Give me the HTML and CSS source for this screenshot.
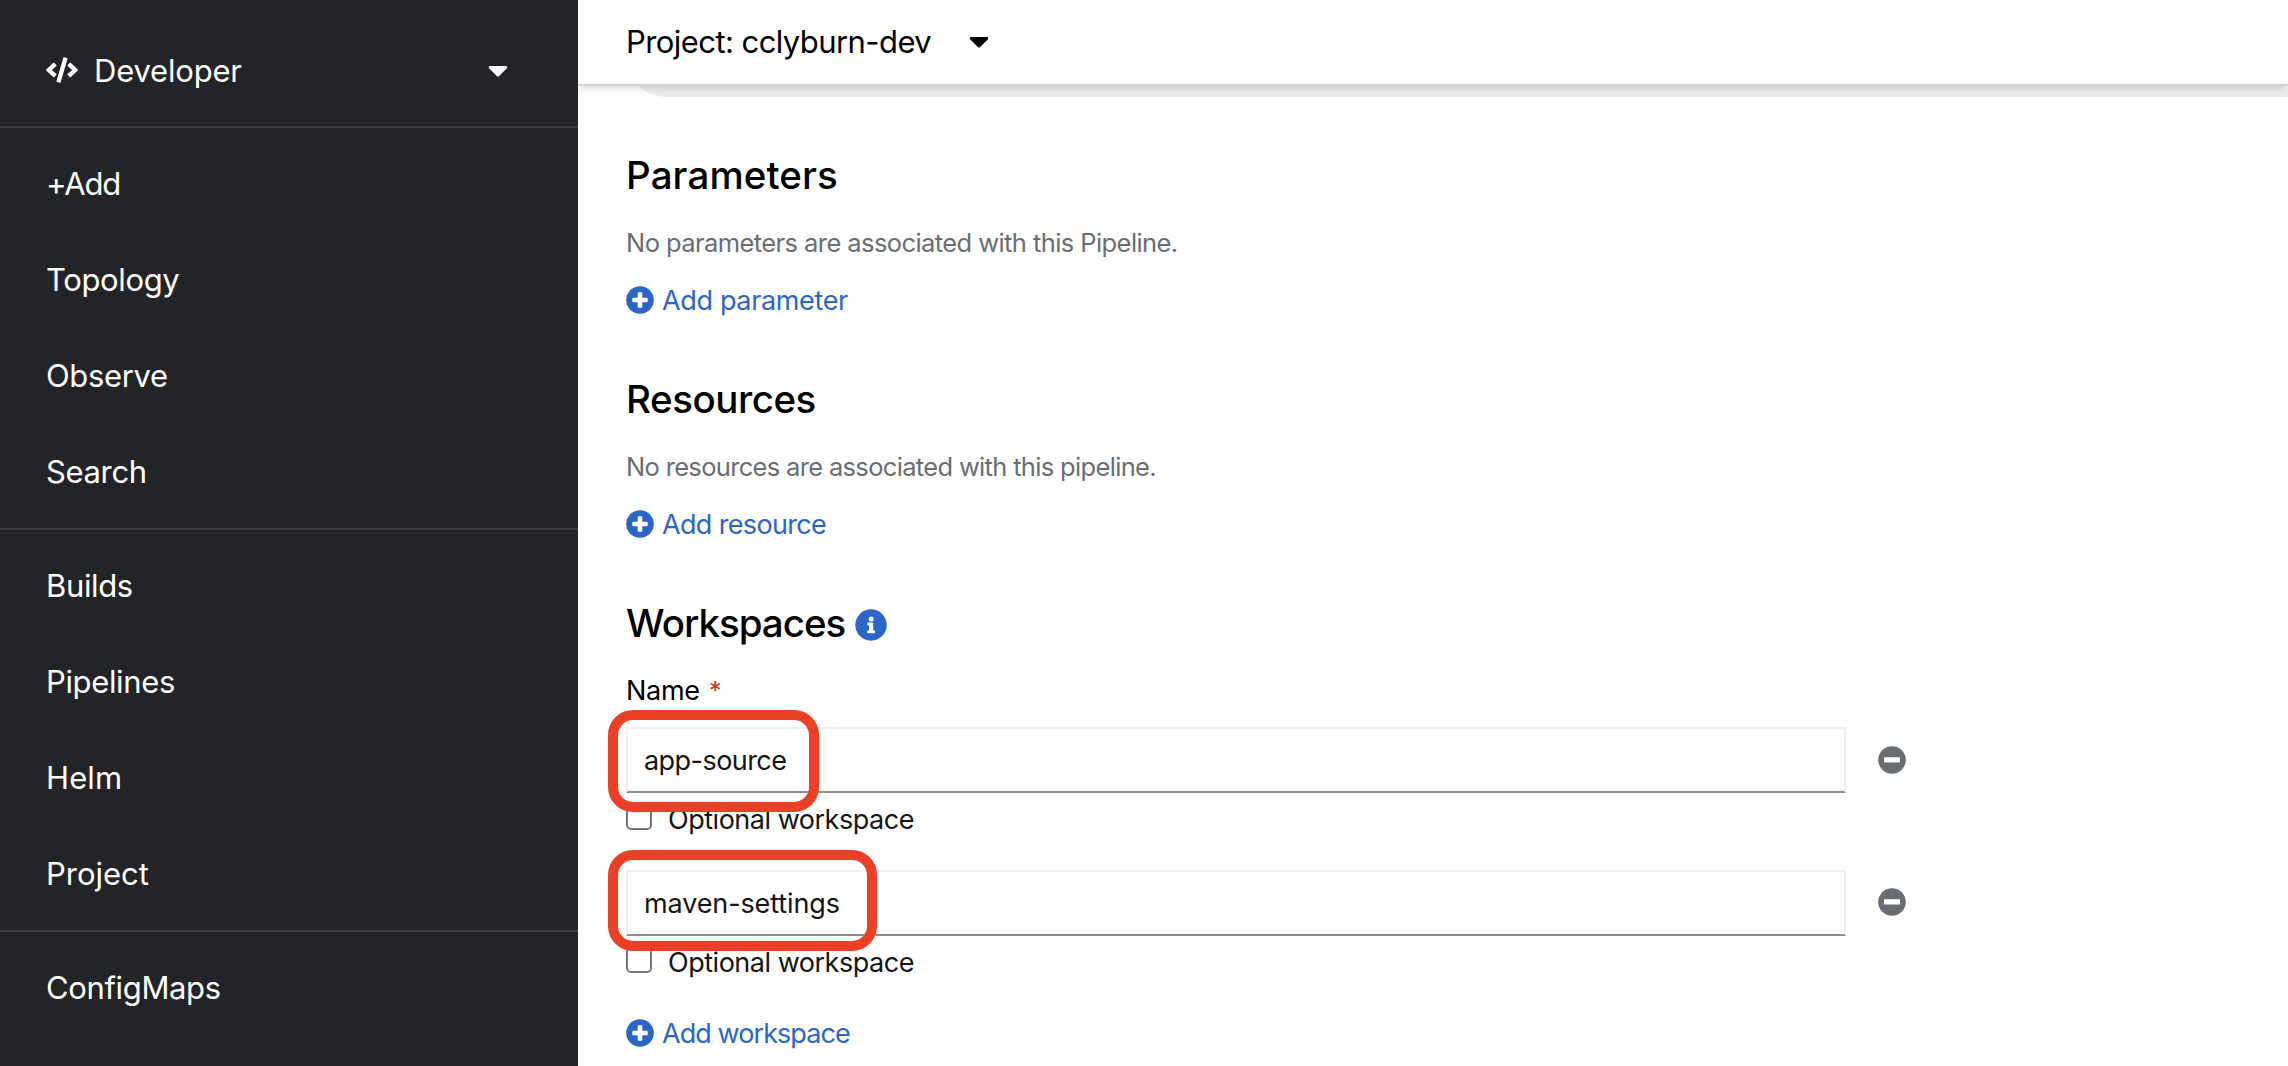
FILE: index.html
```
<!DOCTYPE html>
<html lang="en">
<head>
<meta charset="utf-8">
<title>Pipeline builder</title>
<link rel="stylesheet" href="styles.css">
</head>
<body>
<svg class="defs" aria-hidden="true">
  <symbol id="caret" viewBox="0 0 320 512"><path d="M31.3 192h257.3c17.8 0 26.7 21.5 14.1 34.1L174.1 354.8c-7.8 7.8-20.5 7.8-28.3 0L17.2 226.1C4.6 213.5 13.5 192 31.3 192z"/></symbol>
  <symbol id="plus" viewBox="0 0 28 28"><circle cx="14" cy="14" r="13.8"/><path d="M14 6.800v14.400M6.800 14h14.400" fill="none" stroke="#fff" stroke-width="4.600"/><path d="M14 6.300v15.400M6.300 14h15.400" fill="none" stroke="#fff" stroke-width="3.400"/></symbol>
  <symbol id="minus" viewBox="0 0 28 28"><circle cx="14" cy="14" r="13.8"/><rect x="6" y="11.2" width="16" height="5.4" rx="0.8" fill="#fff"/></symbol>
</svg>

<nav class="sidebar">
  <div class="perspective">
    <svg class="code-icon" viewBox="0 0 640 512"><path d="M278.9 511.5l-61-17.700c-6.400-1.800-10-8.500-8.200-14.900L346.200 8.700c1.800-6.400 8.500-10 14.900-8.200l61 17.700c6.400 1.800 10 8.500 8.200 14.900L293.800 503.300c-1.900 6.400-8.500 10.100-14.900 8.200zm-114-112.200l43.500-46.400c4.600-4.900 4.300-12.700-.8-17.200L117 256l90.600-79.700c5.100-4.500 5.500-12.300.8-17.200l-43.500-46.400c-4.500-4.800-12.100-5.100-17-.5L3.800 247.200c-5.100 4.700-5.100 12.800 0 17.500l144.100 135.100c4.900 4.600 12.500 4.400 17-.5zm327.200.6l144.100-135.100c5.100-4.700 5.100-12.800 0-17.500L492.100 112.100c-4.800-4.500-12.400-4.300-17 .5L431.600 159c-4.600 4.900-4.300 12.700.8 17.200L523 256l-90.600 79.700c-5.100 4.500-5.500 12.300-.8 17.200l43.500 46.400c4.500 4.900 12.100 5.100 17 .6z"/></svg>
    <span class="bar-text">Developer</span>
    <svg class="caret"><use href="#caret"/></svg>
  </div>
  <ul class="nav-group">
    <li class="tight-add">+Add</li><li>Topology</li><li>Observe</li><li>Search</li>
  </ul>
  <ul class="nav-group">
    <li>Builds</li><li>Pipelines</li><li class="loose">Helm</li><li class="normal">Project</li>
  </ul>
  <ul class="nav-group">
    <li>ConfigMaps</li>
  </ul>
</nav>

<main class="main">
  <header class="project-bar">
    <span class="bar-text">Project: cclyburn-dev</span>
    <svg class="caret"><use href="#caret"/></svg>
  </header>
  <div class="canvas-clip"><div class="canvas-panel"></div></div>

  <section class="section">
    <h2 class="title parameters">Parameters</h2>
    <p class="hint">No parameters are associated with this Pipeline.</p>
    <a class="add parameter"><svg><use href="#plus"/></svg>Add parameter</a>
  </section>

  <section class="section">
    <h2 class="title resources">Resources</h2>
    <p class="hint resource-hint">No resources are associated with this pipeline.</p>
    <a class="add resource"><svg><use href="#plus"/></svg>Add resource</a>
  </section>

  <section class="section">
    <h2 class="title workspaces">Workspaces
      <svg class="info" viewBox="0 0 32 32"><circle cx="16" cy="16" r="15.700"/><path fill="#fff" d="M12.400 13.600h5.800v7.900h1.700v2.700h-7.600v-2.700h1.700v-5.200h-1.600z"/><circle cx="16.200" cy="10" r="2.500" fill="#fff"/></svg>
    </h2>
    <div class="label">Name <span class="required">*</span></div>

    <div class="field">
      <input class="text app-source" type="text" value="app-source">
      <svg class="remove"><use href="#minus"/></svg>
      <div class="highlight first"></div>
    </div>
    <label class="optional"><input type="checkbox">Optional workspace</label>

    <div class="field second-field">
      <input class="text maven" type="text" value="maven-settings">
      <svg class="remove"><use href="#minus"/></svg>
      <div class="highlight second"></div>
    </div>
    <label class="optional"><input type="checkbox">Optional workspace</label>

    <a class="add workspace"><svg><use href="#plus"/></svg>Add workspace</a>
  </section>
</main>
</body>
</html>
```
FILE: styles.css
```
* { box-sizing: border-box; }

body {
  margin: 0;
  display: flex;
  height: 1066px;
  overflow: hidden;
  background: #fff;
  color: #000;
  font-family: Inter, "Liberation Sans", sans-serif;
  font-size: 27px;
  line-height: 42px;
}

.defs { display: none; }
svg { display: block; flex: none; fill: currentColor; }
.caret { width: 20px; height: 32px; }
.bar-text { padding-top: 2px; }

/* Sidebar */
.sidebar {
  position: relative;
  z-index: 2;
  flex: none;
  width: 578px;
  background: #232428;
  color: #fff;
  font-size: 31px;
  line-height: 48px;
  letter-spacing: -0.36px;
}
.perspective {
  display: flex;
  align-items: center;
  height: 126px;
  padding: 14px 70px 0 46px;
  letter-spacing: -0.2px;
}
.perspective .caret { margin-left: auto; }
.code-icon { width: 32px; height: 26px; margin-right: 16px; }
.nav-group {
  margin: 0;
  padding: 8px 0;
  list-style: none;
  border-top: 2px solid #3e3f43;
}
.nav-group li { padding: 24px 46px; }
.nav-group .tight-add { letter-spacing: -1.2px; }
.nav-group .loose { letter-spacing: 0.1px; }
.nav-group .normal { letter-spacing: 0; }

/* Main column */
.main { flex: 1; min-width: 0; }
.project-bar {
  position: relative;
  z-index: 1;
  display: flex;
  align-items: center;
  gap: 38px;
  height: 86px;
  padding: 0 48px 2px;
  background: #fff;
  border-bottom: 2px solid #d2d2d2;
  box-shadow: 0 4px 8px -2px rgba(3, 3, 3, 0.16);
  font-size: 31px;
  letter-spacing: -0.57px;
}
.canvas-clip { height: 11px; overflow: hidden; padding-left: 48px; }
.canvas-panel {
  height: 60px;
  margin-top: -49px;
  background: #ededed;
  border-radius: 0 0 0 40px;
}

.section { padding: 54px 48px 0; }
.title {
  display: flex;
  align-items: center;
  margin: 0;
  font-size: 38.5px;
  font-weight: 500;
  line-height: 48px;
}
.parameters { letter-spacing: 0.1px; }
.resources { letter-spacing: -0.45px; }
.workspaces { letter-spacing: -1px; }
.info { width: 32px; height: 32px; margin: 4px 0 0 10px; color: #2b65c8; }

.hint {
  margin: 24px 0 16px;
  font-size: 25.5px;
  line-height: 40px;
  letter-spacing: -0.58px;
  color: #6a6e73;
}
.resource-hint { letter-spacing: -0.67px; }

.add {
  display: flex;
  align-items: center;
  height: 42px;
  padding-top: 2px;
  color: #2b65c8;
}
.add svg { width: 28px; height: 28px; margin: 0 8px 2px 0; }
.parameter { letter-spacing: -0.35px; }
.resource { letter-spacing: -0.66px; }
.workspace { margin-top: 29px; letter-spacing: -0.93px; }

.label { margin: 23px 0 15px; letter-spacing: -0.28px; }
.required {
  display: inline-block;
  margin-left: 2px;
  font-size: 25px;
  line-height: 30px;
  color: #c9321f;
}

.field { position: relative; display: flex; align-items: center; gap: 32px; }
.second-field { margin-top: 30px; }
.text {
  width: 1220px;
  height: 66px;
  padding: 0 16px;
  border: 2px solid #f0f0f0;
  border-bottom-color: #8a8d90;
  border-radius: 0;
  background: #fff;
  color: #151515;
  font: 27px Inter, "Liberation Sans", sans-serif;
}
.app-source { letter-spacing: -0.55px; }
.maven { letter-spacing: -0.12px; }
.remove { width: 28px; height: 28px; color: #6a6e73; }
.second-field .remove { margin-bottom: 2px; }

.optional {
  display: flex;
  align-items: center;
  height: 42px;
  margin-top: 5px;
  padding-top: 2px;
  color: #151515;
  letter-spacing: -0.48px;
}
.optional input {
  appearance: none;
  width: 26px;
  height: 26px;
  margin: 0 16px 6px 0;
  border: 2px solid #767676;
  border-radius: 5px;
  background: #fff;
}

/* Callout rings drawn over the workspace names */
.highlight {
  position: absolute;
  z-index: 1;
  left: -18px;
  border: 10px solid #eb4026;
  border-radius: 25px;
}
.first { top: -17px; width: 211px; height: 102px; }
.second { top: -20px; width: 269px; height: 101px; }
```
